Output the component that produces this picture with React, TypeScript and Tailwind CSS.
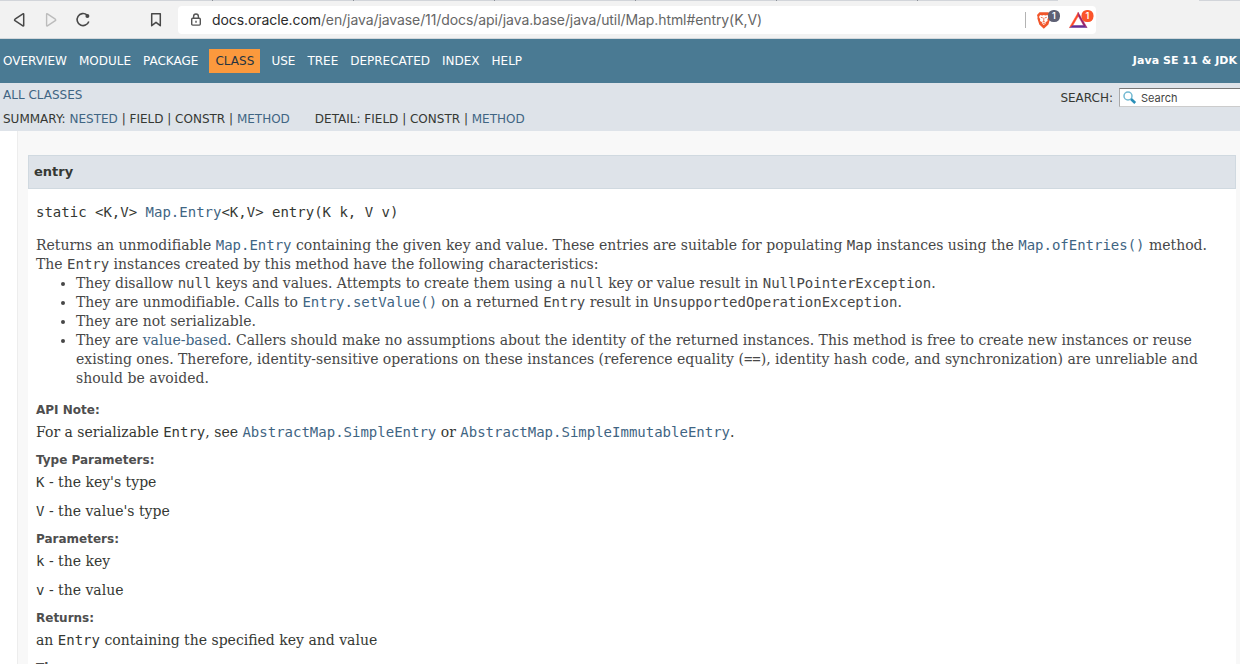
import type { ReactNode } from "react";

const SANS = "font-['DejaVu_Sans',sans-serif]";
const MONO = "font-['DejaVu_Sans_Mono',monospace]";
const SERIF = "font-['DejaVu_Serif',serif]";
const UI = "font-['Inter',sans-serif]";

function Link({ children }: { children: ReactNode }) {
  return <a className="text-[#3f6583]">{children}</a>;
}

function Code({ children }: { children: ReactNode }) {
  return <code className={`${MONO} text-[14px] leading-[1px]`}>{children}</code>;
}

function Label({ children }: { children: ReactNode }) {
  return <dt className={`${SANS} h-[18px] text-[12px] leading-[18px] font-bold text-[#4e4e4e]`}>{children}</dt>;
}

function Detail({ children, next = false }: { children: ReactNode; next?: boolean }) {
  return <dd className={`${next ? "mt-[10px]" : "mt-[4px]"} mb-[9px] h-[19px] leading-[19px] text-[#353833]`}>{children}</dd>;
}

function Toolbar() {
  const tabs = ["w-[213px]", "w-[141px]", "w-[141px]", "w-[141px]", "w-[141px]", "w-[141px]"];
  return (
    <header className="flex h-[39px] flex-col border-b border-[#d3d8dc] bg-[#f2f2f2]">
      <div className="flex h-px bg-[#d2d5da]">
        {tabs.map((w, i) => (
          <div key={i} className={`${w} shrink-0 border-r border-[#8b8f96]`} />
        ))}
        <div className="w-[140px]" />
        <div className="w-[141px] bg-[#f2f2f2]" />
      </div>
      <div className="flex h-[37px] items-center pt-[1px]">
        <svg className="ml-[12px] shrink-0" width="14" height="16" viewBox="0 0 14 16" fill="none" stroke="#484848" strokeWidth="1.5" strokeLinejoin="round">
          <path d="M11.7 2.2v11.2q0 .8-.8.4L3 8.7q-.9-.7 0-1.5l7.9-5.3q.8-.4.8.3z" />
        </svg>
        <svg className="ml-[18px] shrink-0" width="14" height="16" viewBox="0 0 14 16" fill="none" stroke="#bcbcbc" strokeWidth="1.4" strokeLinejoin="round">
          <path d="M2.6 2.2v11.2q0 .8.8.4l7.9-5.1q.9-.7 0-1.5L3.4 1.9q-.8-.4-.8.3z" />
        </svg>
        <svg className="ml-[17px] shrink-0" width="16" height="16" viewBox="0 0 16 16" fill="none">
          <path d="M11.9 2.9A6 6 0 1 0 13.8 9.5" stroke="#484848" strokeWidth="1.6" />
          <circle cx="12.4" cy="4" r="2" fill="#484848" />
        </svg>
        <svg className="ml-[59px] shrink-0" width="12" height="16" viewBox="0 0 12 16" fill="none" stroke="#484848" strokeWidth="1.5" strokeLinejoin="round">
          <path d="M1.7 1.7h8.6v12L6 10.3l-4.3 3.4z" />
        </svg>
        <div className="ml-[16px] flex h-[28px] w-[918px] items-center rounded-[4px] bg-white">
          <svg className="ml-[12px] shrink-0" width="12" height="14" viewBox="0 0 12 14" fill="none" stroke="#555" strokeWidth="1.4">
            <rect x="1.7" y="5.3" width="8.6" height="6.8" rx="1" />
            <path d="M3.6 5V3.4a2.4 2.4 0 0 1 4.8 0V5" />
            <path d="M6 7.7v2" />
          </svg>
          <div className={`${UI} ml-[10px] w-[813px] whitespace-nowrap text-[14px] leading-[20px] tracking-[-0.085px] text-[#666]`}>
            <span className="text-[#2b2b2b]">docs.oracle.com</span>/en/java/javase/11/docs/api/java.base/java/util/Map.html#entry(K,V)
          </div>
          <div className="h-[16px] w-px bg-[#b3b3b3]" />
          <svg className="ml-[10px] shrink-0" width="26" height="20" viewBox="0 0 26 20">
            <path d="M3.5 2.3h9l2 2.7-.5 2 .2 1.4-1.8 6.2-4.6 4.1-4.5-4.1L1.4 8.4 1.6 7 1 5z" fill="#f1562b" />
            <path d="M4.1 5l2.2.4 1.5-.3 1.5.3 2.2-.4 1.1 2.1-1.2 2.2.2 1.6-2.2 1.3.5 1.1-2.1 1.7-2.1-1.7.5-1.1L4 10.9l.2-1.6L3 7.1z" fill="white" />
            <path d="M4.8 7.3l2 .6M10.8 7.3l-2 .6M7.8 7.8v3l-1 .8h2M6.5 13.3h2.6" fill="none" stroke="#f1562b" strokeWidth=".8" />
            <rect x="12" y="0" width="12" height="12" rx="5.4" fill="#5e6175" />
            <text x="18" y="9.1" textAnchor="middle" fill="white" className={`${UI} text-[9px] font-semibold`}>1</text>
          </svg>
          <svg className="ml-[7px] shrink-0" width="26" height="20" viewBox="0 0 26 20">
            <path d="M9.2 2.4L.4 17.7l3.3-2.1 5.6-9.5z" fill="#ff4724" stroke="#ff4724" strokeWidth=".5" />
            <path d="M9.2 2.4l8.9 15.3-3.4-2.1-5.4-9.5z" fill="#9e1f63" stroke="#9e1f63" strokeWidth=".5" />
            <path d="M.4 17.7h17.7l-3.4-2.5H3.8z" fill="#662d91" />
            <rect x="12.5" y="0" width="12" height="12" rx="5.4" fill="#fb542b" />
            <text x="18.5" y="9.1" textAnchor="middle" fill="white" className={`${UI} text-[9px] font-semibold`}>1</text>
          </svg>
        </div>
      </div>
    </header>
  );
}

function Navigation() {
  return (
    <nav className={`${SANS} text-[12px]`}>
      <div className="flex h-[44px] items-center justify-between bg-[#4a7a93] pl-[3px] text-white">
        <ul className="flex items-center leading-[24px]">
          <li className="mr-[12px]">OVERVIEW</li>
          <li className="mr-[12px]">MODULE</li>
          <li className="mr-[11px]">PACKAGE</li>
          <li className="mr-[11px] h-[24px] w-[51px] bg-[#fb993d] text-center text-[#253441]">CLASS</li>
          <li className="mr-[12px]">USE</li>
          <li className="mr-[12px]">TREE</li>
          <li className="mr-[12px]">DEPRECATED</li>
          <li className="mr-[12px]">INDEX</li>
          <li>HELP</li>
        </ul>
        <div className="mr-[3px] text-[11px] font-bold tracking-[0.04px]">Java SE 11 &amp; JDK</div>
      </div>
      <div className="flex h-[48px] justify-between bg-[#dee3e9] pl-[3px] text-[#353833]">
        <div className="leading-[24px]">
          <div><Link>ALL CLASSES</Link></div>
          <div className="flex">
            <div className="mr-[25px]">SUMMARY: <Link>NESTED</Link> | FIELD | CONSTR | <Link>METHOD</Link></div>
            <div>DETAIL: FIELD | CONSTR | <Link>METHOD</Link></div>
          </div>
        </div>
        <div className="flex h-[24px] items-start pt-[5px]">
          <span className="mr-[6px] leading-[20px]">SEARCH:</span>
          <div className={`${UI} flex h-[19px] w-[121px] items-center border-t border-b border-l border-t-[#777] border-b-[#ccc] border-l-[#aaa] bg-white text-[11px] text-[#444]`}>
            <svg className="ml-[2px] mr-[4px]" width="15" height="15" viewBox="0 0 15 15" fill="none">
              <circle cx="6" cy="6" r="4" stroke="#72b9d2" strokeWidth="1.5" />
              <path d="M9 9l4.2 4" stroke="#298fb8" strokeWidth="2.6" />
            </svg>
            <span className="pt-px">Search</span>
          </div>
        </div>
      </div>
    </nav>
  );
}

export default function App() {
  return (
    <div className="h-[664px] w-[1240px] overflow-hidden bg-white">
      <Toolbar />
      <Navigation />
      <main className="ml-[17px] h-[533px] border-l border-[#ededed] bg-[#f8f8f8] pt-[24px] pr-[4px] pl-[10px]">
        <section className={`${SERIF} h-[509px] bg-white text-[14px] leading-[19px] text-[#474747]`}>
          <h4 className={`${SANS} h-[34px] border border-[#d0d9e0] bg-[#dee3e9] pl-[5px] text-[13px] leading-[31px] font-bold text-[#353833]`}>entry</h4>
          <div className="pl-[8px]">
            <pre className={`${MONO} mt-[14px] h-[19px] text-[14px] leading-[19px] text-[#353833]`}>{"static <K,V> "}<Link>Map.Entry</Link>{"<K,V> entry(K k, V v)"}</pre>
            <div className="mt-[14px] whitespace-nowrap tracking-[-0.01px]">
              Returns an unmodifiable <Link><Code>Map.Entry</Code></Link> containing the given key and value. These entries are suitable for populating <Code>Map</Code> instances using the <Link><Code>Map.ofEntries()</Code></Link> method.<br />
              The <Code>Entry</Code> instances created by this method have the following characteristics:
              <ul className="list-disc pl-[40px]">
                <li>They disallow <Code>null</Code> keys and values. Attempts to create them using a <Code>null</Code> key or value result in <Code>NullPointerException</Code>.</li>
                <li>They are unmodifiable. Calls to <Link><Code>Entry.setValue()</Code></Link> on a returned <Code>Entry</Code> result in <Code>UnsupportedOperationException</Code>.</li>
                <li>They are not serializable.</li>
                <li>
                  They are <Link>value-based</Link>. Callers should make no assumptions about the identity of the returned instances. This method is free to create new instances or reuse<br />
                  existing ones. Therefore, identity-sensitive operations on these instances (reference equality (<Code>==</Code>), identity hash code, and synchronization) are unreliable and<br />
                  should be avoided.
                </li>
              </ul>
            </div>
            <dl className="mt-[13px]">
              <Label>API Note:</Label>
              <dd className="mt-[4px] mb-[9px] h-[19px] text-[#353833]">For a serializable <Code>Entry</Code>, see <Link><Code>AbstractMap.SimpleEntry</Code></Link> or <Link><Code>AbstractMap.SimpleImmutableEntry</Code></Link>.</dd>
              <Label>Type Parameters:</Label>
              <Detail><Code>K</Code> - the key's type</Detail>
              <Detail next><Code>V</Code> - the value's type</Detail>
              <Label>Parameters:</Label>
              <Detail><Code>k</Code> - the key</Detail>
              <Detail next><Code>v</Code> - the value</Detail>
              <Label>Returns:</Label>
              <Detail>an <Code>Entry</Code> containing the specified key and value</Detail>
              <Label>Throws:</Label>
            </dl>
          </div>
        </section>
      </main>
    </div>
  );
}
